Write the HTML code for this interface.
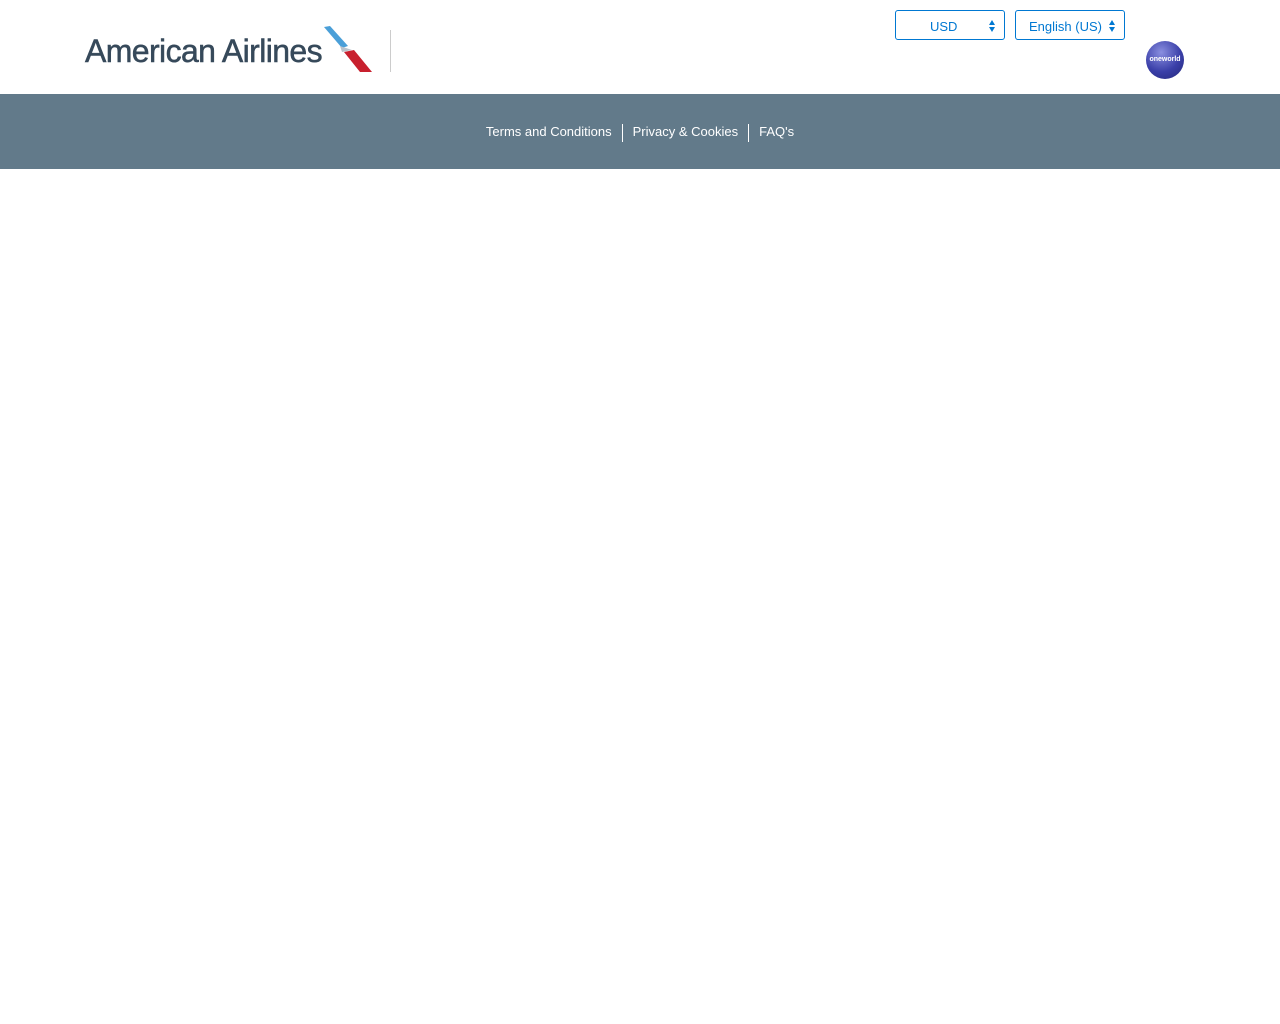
<!DOCTYPE html>
<html><head><meta charset="utf-8"><style>
html,body{margin:0;padding:0;background:#fff;width:1280px;height:1024px;overflow:hidden;font-family:"Liberation Sans",sans-serif}
.hdr{position:relative;height:94px}
.logo{position:absolute;left:85px;top:33px;font-size:32px;color:#36495a;letter-spacing:-0.6px;font-weight:normal;-webkit-text-stroke:0.5px #36495a}
.sep{position:absolute;left:390px;top:30px;width:1px;height:42px;background:#ccc}
.sel{position:absolute;top:10px;height:28px;border:1px solid #0078d2;border-radius:3px;color:#0078d2;font-size:13px;line-height:31px;box-sizing:content-box}
.sel .a{position:absolute;right:9px;top:8px;width:0;height:0}
.ow{position:absolute;left:1146px;top:41px;width:38px;height:38px;border-radius:50%;background:radial-gradient(circle at 40% 30%,#8a8fe0,#3a3fa8 55%,#23277a);color:#fff;font-size:7px;line-height:38px;text-align:center;font-weight:bold}
.nav{position:absolute;top:94px;left:0;width:1280px;height:75px;background:#627a8a;color:#fff;font-size:13px;text-align:center;line-height:76px}
.nav span{padding:0 10px}
.nav i{display:inline-block;width:1px;height:18px;background:#fff;vertical-align:middle}
</style></head><body>
<div class="hdr">
<div class="logo">American Airlines</div>
<svg style="position:absolute;left:322px;top:26px" width="54" height="48" viewBox="0 0 54 48">
<path d="M2 1 L8 0 L26 20 L20 22 Z" fill="#4a9fd8"/>
<path d="M18 20 L30 24 L20 26 Z" fill="#b9c3cc"/>
<path d="M22 26 L32 24 L50 46 L38 46 Z" fill="#c8202e"/>
</svg>
<div class="sep"></div>
<div class="sel" style="left:895px;width:108px"><span style="position:absolute;left:34px">USD</span><svg class="a" style="right:9px;top:9px;width:6px;height:12px" viewBox="0 0 6 12"><path d="M0 5L3 0L6 5Z M0 7L3 12L6 7Z" fill="#0078d2"/></svg></div>
<div class="sel" style="left:1015px;width:108px"><span style="position:absolute;left:13px">English (US)</span><svg class="a" style="right:9px;top:9px;width:6px;height:12px" viewBox="0 0 6 12"><path d="M0 5L3 0L6 5Z M0 7L3 12L6 7Z" fill="#0078d2"/></svg></div>
<div class="ow">oneworld</div>
</div>
<div class="nav"><span>Terms and Conditions</span><i></i><span>Privacy &amp; Cookies</span><i></i><span>FAQ's</span></div>
</body></html>
